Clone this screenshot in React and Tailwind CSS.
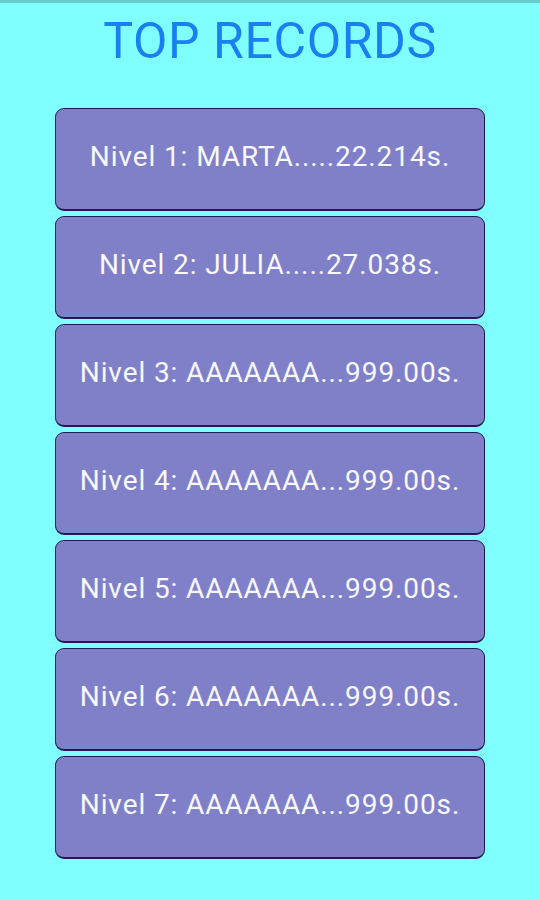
const records = [
  'Nivel 1: MARTA.....22.214s.',
  'Nivel 2: JULIA.....27.038s.',
  'Nivel 3: AAAAAAA...999.00s.',
  'Nivel 4: AAAAAAA...999.00s.',
  'Nivel 5: AAAAAAA...999.00s.',
  'Nivel 6: AAAAAAA...999.00s.',
  'Nivel 7: AAAAAAA...999.00s.',
]

export default function App() {
  return (
    <div className="w-[540px] h-[900px] bg-[#80ffff] flex flex-col items-center" style={{ fontFamily: 'Roboto, "Noto Sans", sans-serif' }}>
      <div className="w-full h-[3px] bg-[#66cccc]" />
      <h1 className="mt-[9px] text-[50px] leading-[58px] text-[#1a7ff0] tracking-[0.6px]">TOP RECORDS</h1>
      <div className="mt-[38px] flex flex-col gap-[5px]">
        {records.map((r) => (
          <div
            key={r}
            className="w-[430px] h-[103px] rounded-[9px] border-[1.5px] border-b-2 border-[#1c1c5a] bg-[#8080c8] flex items-center justify-center pb-[5px] text-[#f8f8ff] text-[28px] tracking-[0.9px]"
          >
            {r}
          </div>
        ))}
      </div>
    </div>
  )
}
